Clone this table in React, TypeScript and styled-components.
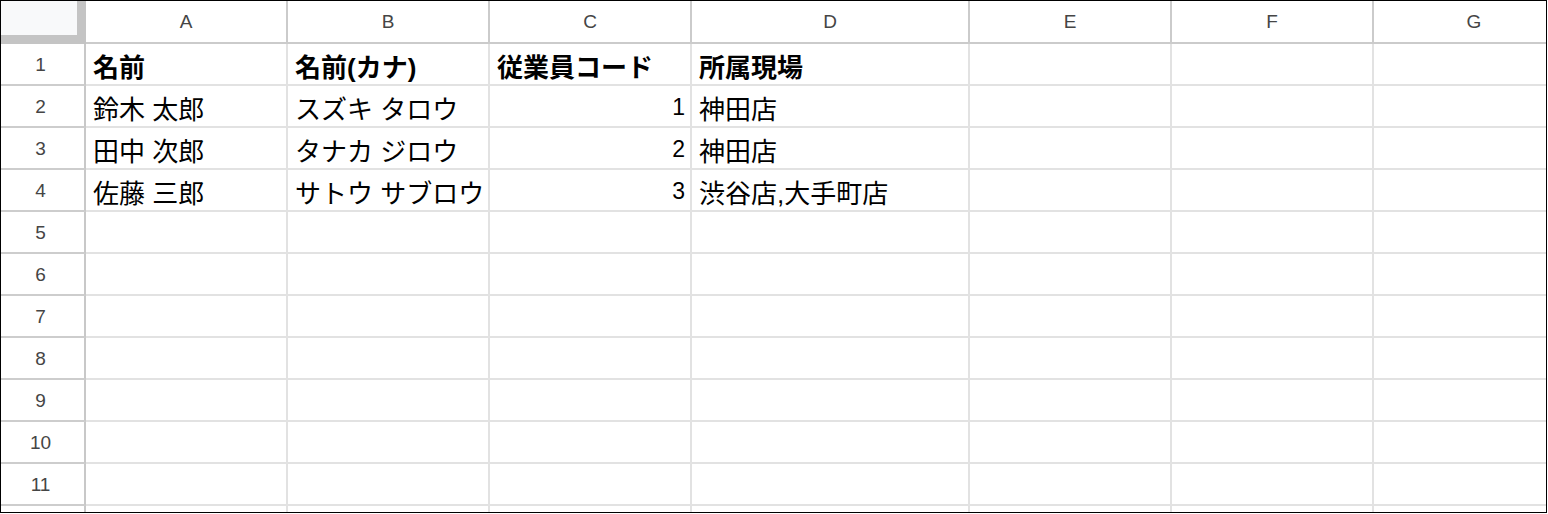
import React from "react";
import styled, { createGlobalStyle } from "styled-components";

const GlobalStyle = createGlobalStyle`
  html, body { margin: 0; padding: 0; background: #ffffff; }
  body { font-family: "Liberation Sans", "Noto Sans CJK JP", sans-serif; }
`;

const COLS = "85px 202px 202px 202px 278px 202px 202px 202px";

const Sheet = styled.div`
  box-sizing: border-box;
  width: 1547px;
  height: 513px;
  border: 1px solid #000000;
  overflow: hidden;
  background: #ffffff;
`;

const HeaderRow = styled.div`
  display: grid;
  grid-template-columns: ${COLS};
  height: 43px;
`;

const Corner = styled.div`
  box-sizing: border-box;
  background: #f8f9fa;
  border-right: 9px solid #c4c4c4;
  border-bottom: 9px solid #c4c4c4;
`;

const ColHeader = styled.div`
  box-sizing: border-box;
  display: flex;
  align-items: center;
  justify-content: center;
  border-right: 2px solid #cbcbcb;
  border-bottom: 2px solid #cbcbcb;
  color: #454545;
  font-size: 19px;
  padding-top: 1px;
`;

const Row = styled.div`
  display: grid;
  grid-template-columns: ${COLS};
  height: 42px;
`;

const RowHeader = styled.div`
  box-sizing: border-box;
  display: flex;
  align-items: center;
  justify-content: center;
  padding: 2px 4px 0 0;
  border-right: 2px solid #c8c8c8;
  border-bottom: 2px solid #cdcdcd;
  color: #454545;
  font-size: 19px;
`;

const Cell = styled.div<{ $bold?: boolean; $right?: boolean }>`
  box-sizing: border-box;
  display: flex;
  align-items: center;
  justify-content: ${(p) => (p.$right ? "flex-end" : "flex-start")};
  padding: 2px ${(p) => (p.$right ? "5px" : "0")} 0 ${(p) => (p.$right ? "0" : "7px")};
  border-right: 2px solid #e2e2e2;
  border-bottom: 2px solid #e2e2e2;
  color: #000000;
  font-size: ${(p) => (p.$right ? "23px" : "26px")};
  font-weight: ${(p) => (p.$bold ? 700 : 400)};
  white-space: nowrap;
  overflow: hidden;
`;

type CellData = { text: string; right?: boolean };

const columns = ["A", "B", "C", "D", "E", "F", "G"];

const data: CellData[][] = [
  [{ text: "名前" }, { text: "名前(カナ)" }, { text: "従業員コード" }, { text: "所属現場" }],
  [{ text: "鈴木 太郎" }, { text: "スズキ タロウ" }, { text: "1", right: true }, { text: "神田店" }],
  [{ text: "田中 次郎" }, { text: "タナカ ジロウ" }, { text: "2", right: true }, { text: "神田店" }],
  [{ text: "佐藤 三郎" }, { text: "サトウ サブロウ" }, { text: "3", right: true }, { text: "渋谷店,大手町店" }],
];

export default function App() {
  const rows = Array.from({ length: 12 }, (_, i) => i + 1);
  return (
    <>
      <GlobalStyle />
      <Sheet>
        <HeaderRow>
          <Corner />
          {columns.map((c) => (
            <ColHeader key={c}>{c}</ColHeader>
          ))}
        </HeaderRow>
        {rows.map((r) => (
          <Row key={r}>
            <RowHeader>{r <= 11 ? r : ""}</RowHeader>
            {columns.map((c, ci) => {
              const cell = data[r - 1]?.[ci];
              return (
                <Cell key={c} $bold={r === 1} $right={cell?.right}>
                  {cell?.text ?? ""}
                </Cell>
              );
            })}
          </Row>
        ))}
      </Sheet>
    </>
  );
}
